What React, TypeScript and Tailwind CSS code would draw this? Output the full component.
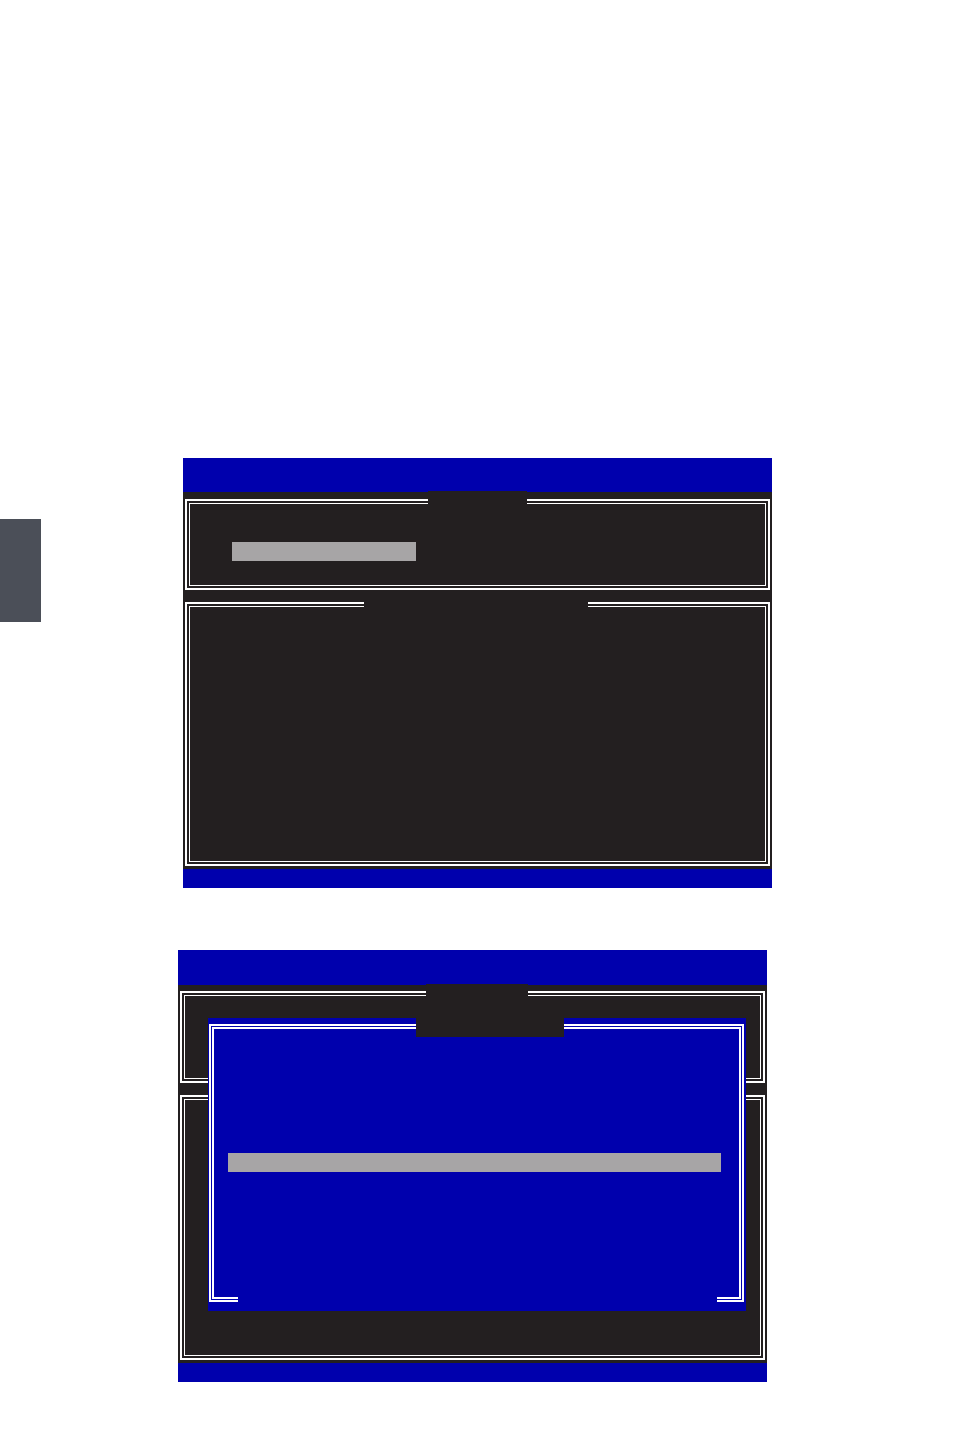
import React from "react";

const BLUE = "bg-[#0000ad]";

// Double-line box used by the setup screens: heavy outer rule, thin inner rule.
function Frame({
  className = "",
  children,
}: {
  className?: string;
  children?: React.ReactNode;
}) {
  return (
    <div className={`relative border-2 border-white p-[2px] ${className}`}>
      <div className="h-full border border-white">{children}</div>
    </div>
  );
}

function SideTab() {
  return <div className="mt-[61px] h-[103px] w-[41px] shrink-0 bg-[#4b4f58]" />;
}

function FirstScreen() {
  return (
    <div className={`ml-[142px] flex w-[589px] flex-col ${BLUE}`}>
      <div className="h-[34px]" />
      <div className="flex h-[377px] flex-col bg-[#231f20] px-[2px] pb-[3px] pt-[7px]">
        <Frame className="h-[91px] w-[585px]">
          <div className="ml-[42px] mt-[38px] h-[19px] w-[184px] bg-[#a7a5a6]" />
          <div className="absolute left-[241px] top-[-10px] h-[14px] w-[99px] bg-[#231f20]" />
        </Frame>
        <Frame className="mt-[12px] h-[264px] w-[585px]">
          <div className="absolute left-[177px] top-[-3px] h-[7px] w-[224px] bg-[#231f20]" />
        </Frame>
      </div>
      <div className="h-[19px]" />
    </div>
  );
}

function Dialog() {
  return (
    <div className={`absolute left-[30px] top-[68px] h-[293px] w-[538px] ${BLUE}`}>
      <div className="ml-px mt-[6px] h-[278px] w-[535px] border-2 border-white p-px">
        <div className="h-full border-2 border-white">
          <div className="ml-[14px] mt-[124px] h-[19px] w-[493px] bg-[#a7a5a6]" />
        </div>
      </div>
      <div className="absolute left-[208px] top-0 h-[19px] w-[148px] bg-[#231f20]" />
      <div className={`absolute left-[30px] top-[278px] h-[7px] w-[479px] ${BLUE}`} />
    </div>
  );
}

function SecondScreen() {
  return (
    <div className={`relative ml-[178px] mt-[62px] flex w-[589px] flex-col ${BLUE}`}>
      <div className="h-[35px]" />
      <div className="flex h-[378px] flex-col bg-[#231f20] px-[2px] pb-[3px] pt-[6px]">
        <Frame className="h-[92px] w-[585px]">
          <div className="absolute left-[244px] top-[-9px] h-[14px] w-[102px] bg-[#231f20]" />
        </Frame>
        <Frame className="mt-[12px] h-[265px] w-[585px]" />
      </div>
      <div className="h-[19px]" />
      <Dialog />
    </div>
  );
}

export default function App() {
  return (
    <div className="h-[1452px] w-[954px] bg-white font-['Liberation_Sans',sans-serif]">
      <div className="flex items-start pt-[458px]">
        <SideTab />
        <FirstScreen />
      </div>
      <SecondScreen />
    </div>
  );
}
